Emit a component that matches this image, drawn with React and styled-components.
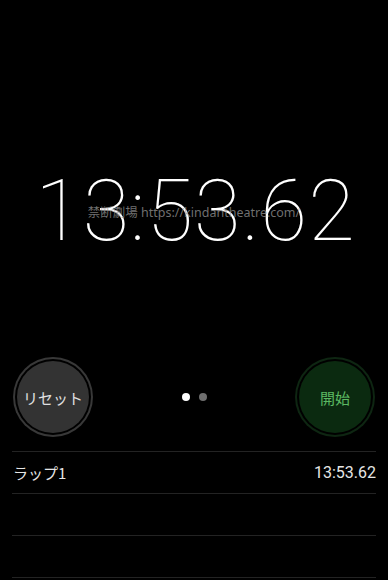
import React from "react";
import styled, { createGlobalStyle } from "styled-components";

const Global = createGlobalStyle`
  html, body { margin: 0; padding: 0; background: #000; }
  body { font-family: Roboto, "Noto Sans CJK JP", sans-serif; color: #fff; }
`;

const Screen = styled.div`
  width: 388px;
  height: 580px;
  background: #000;
  overflow: hidden;
  display: flex;
  flex-direction: column;
  & > * { flex-shrink: 0; }
`;

const Display = styled.div`
  position: relative;
  padding-top: 169px;
  height: 84px;
  display: flex;
  justify-content: center;
`;

const Time = styled.div`
  font-family: Roboto, sans-serif;
  font-weight: 100;
  font-size: 85px;
  line-height: 84px;
  letter-spacing: 1px;
  margin-left: 3px;
  font-variant-numeric: tabular-nums;
  color: #fff;
`;

const Watermark = styled.div`
  position: absolute;
  left: 0;
  right: 0;
  top: 204px;
  text-align: center;
  font-family: "Noto Sans", "Noto Sans CJK JP", sans-serif;
  font-size: 12.5px;
  line-height: 18px;
  color: rgba(150, 150, 150, 0.75);
`;

const Controls = styled.div`
  margin-top: 104px;
  height: 80px;
  padding: 0 17px;
  display: flex;
  align-items: center;
  justify-content: space-between;
`;

const RoundButton = styled.button`
  width: 72px;
  height: 72px;
  border-radius: 50%;
  border: none;
  padding: 0;
  background: ${(p) => (p.$green ? "#0b2a10" : "#333333")};
  box-shadow: 0 0 0 2px #000, 0 0 0 4px ${(p) => (p.$green ? "#0e2612" : "#383838")};
  color: ${(p) => (p.$green ? "#5cb962" : "#e0e0e0")};
  font-family: "Noto Sans CJK JP", sans-serif;
  font-size: 15px;
  display: flex;
  align-items: center;
  justify-content: center;
`;

const Dots = styled.div`
  display: flex;
  gap: 9px;
`;

const Dot = styled.span`
  width: 8px;
  height: 8px;
  border-radius: 50%;
  background: ${(p) => (p.$active ? "#ffffff" : "#6e6e6e")};
`;

const LapList = styled.div`
  margin-top: 14px;
  padding: 0 12px 0 12px;
`;

const LapRow = styled.div`
  height: 41px;
  border-top: 1px solid #232323;
  display: flex;
  align-items: center;
  justify-content: space-between;
  font-size: 16px;
  color: #e6e6e6;
`;

const LapLabel = styled.span`
  font-family: "Noto Sans CJK JP", sans-serif;
  font-size: 15px;
  padding-left: 1px;
`;

const LapTime = styled.span`
  font-family: Roboto, sans-serif;
  font-variant-numeric: tabular-nums;
  font-size: 16px;
`;

export default function App() {
  return (
    <>
      <Global />
      <Screen>
        <Display>
          <Time>13:53.62</Time>
          <Watermark>禁断劇場 https://kindantheatre.com/</Watermark>
        </Display>
        <Controls>
          <RoundButton>リセット</RoundButton>
          <Dots>
            <Dot $active />
            <Dot />
          </Dots>
          <RoundButton $green>開始</RoundButton>
        </Controls>
        <LapList>
          <LapRow>
            <LapLabel>ラップ1</LapLabel>
            <LapTime>13:53.62</LapTime>
          </LapRow>
          <LapRow />
          <LapRow />
          <LapRow />
        </LapList>
      </Screen>
    </>
  );
}
